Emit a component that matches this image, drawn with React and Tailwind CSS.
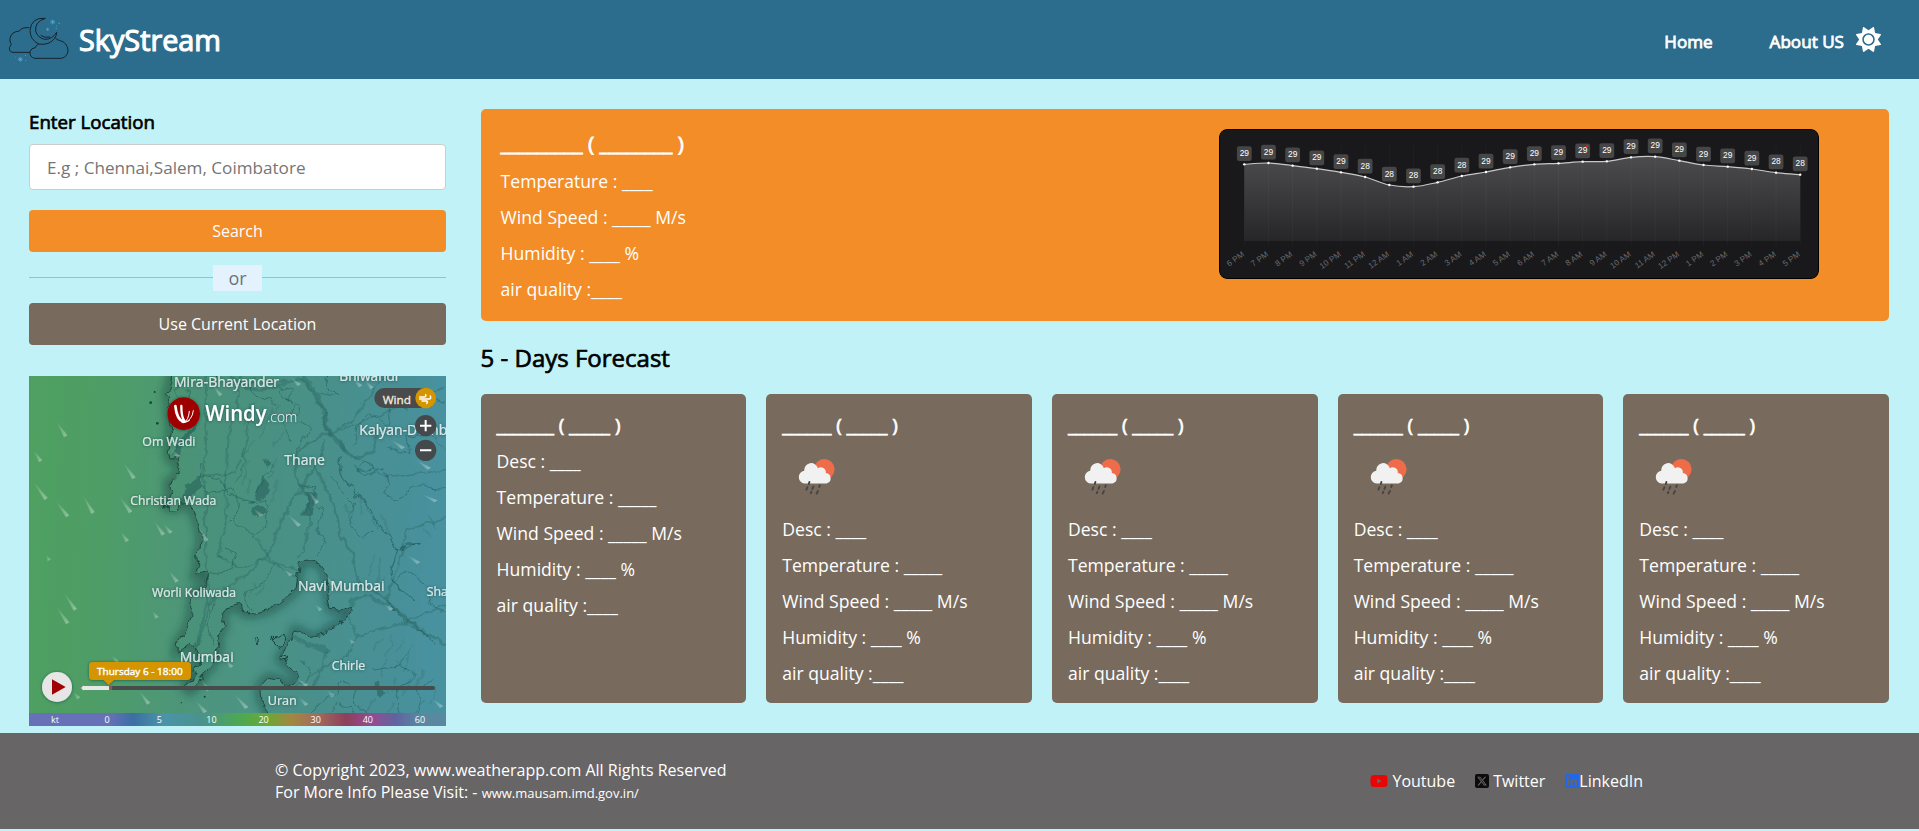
import React from "react";
import { FaSun, FaYoutube, FaSquareXTwitter, FaLinkedin } from "react-icons/fa6";

const HOURS = [
  ["6 PM", 29, 133], ["7 PM", 29, 129], ["8 PM", 29, 137], ["9 PM", 29, 146],
  ["10 PM", 29, 157], ["11 PM", 28, 171], ["12 AM", 28, 195], ["1 AM", 28, 200],
  ["2 AM", 28, 187], ["3 AM", 28, 168], ["4 AM", 29, 156], ["5 AM", 29, 142],
  ["6 AM", 29, 133], ["7 AM", 29, 130], ["8 AM", 29, 125], ["9 AM", 29, 124],
  ["10 AM", 29, 112], ["11 AM", 29, 110], ["12 PM", 29, 122], ["1 PM", 29, 135],
  ["2 PM", 29, 140], ["3 PM", 29, 147], ["4 PM", 28, 158], ["5 PM", 28, 164],
].map(([label, value, y], i) => ({ label, value, x: 25.3 + i * 24.17, y: y / 3 - 9 }));

function smooth(points) {
  let d = `M${points[0].x} ${points[0].y}`;
  for (let i = 0; i < points.length - 1; i++) {
    const p0 = points[Math.max(0, i - 1)];
    const p1 = points[i];
    const p2 = points[i + 1];
    const p3 = points[Math.min(points.length - 1, i + 2)];
    d += ` C${p1.x + (p2.x - p0.x) / 6} ${p1.y + (p2.y - p0.y) / 6} ${p2.x - (p3.x - p1.x) / 6} ${p2.y - (p3.y - p1.y) / 6} ${p2.x} ${p2.y}`;
  }
  return d;
}

function HourlyChart() {
  const line = smooth(HOURS);
  return (
    <svg width="600" height="150" viewBox="0 0 600 150" className="block shrink-0 rounded-lg">
      <defs>
        <linearGradient id="area" x1="0" y1="0" x2="0" y2="1">
          <stop offset="0" stopColor="#4c4c4e" />
          <stop offset="1" stopColor="#262628" />
        </linearGradient>
      </defs>
      <rect x="0.5" y="0.5" width="599" height="149" rx="7.5" fill="#19191b" stroke="#000" />
      <path d={`${line} L581.2 112 L25.3 112 Z`} fill="url(#area)" />
      {HOURS.map((h) => (
        <path key={h.label} d={`M${h.x} 16V117`} stroke="#fff" strokeOpacity="0.03" />
      ))}
      <path d={line} fill="none" stroke="#c8c8c8" strokeWidth="1.2" />
      {HOURS.map((h) => (
        <g key={h.label} fontFamily="'Liberation Sans', Arial, sans-serif">
          <circle cx={h.x} cy={h.y} r="1.2" fill="#fff" />
          <rect x={h.x - 7.4} y={h.y - 18.2} width="14.8" height="14.8" rx="2.2" fill="#464647" />
          <text x={h.x} y={h.y - 8.3} fontSize="8.4" fill="#fff" textAnchor="middle">{h.value}</text>
          <text x={h.x + 0.6} y="127" fontSize="8.2" fill="#6c6c6e" textAnchor="end" transform={`rotate(-35 ${h.x} 127)`}>{h.label}</text>
        </g>
      ))}
      <circle cx="368" cy="17" r="1.2" fill="#f01818" />
    </svg>
  );
}

function Logo() {
  return (
    <svg width="60" height="46" viewBox="27 48 180 138" fill="none" stroke="#16232c" strokeWidth="3" className="block">
      <path d="M90 154H36Q26 150 28 140L34 130Q28 124 30 112Q34 92 58 90Q66 78 88 80" />
      <path d="M136 52Q94 48 90 88Q90 116 116 129Q148 134 164 112Q170 104 170 94Q156 116 134 115Q112 110 107 90Q104 62 136 52Z" />
      <path d="M122 103Q134 112 150 108" />
      <path d="M104 172H184Q203 168 204 148Q202 124 178 118Q170 118 166 110" />
      <path d="M104 172Q88 168 90 152Q94 140 106 140Q108 132 116 129" />
      <g stroke="#4fa9d6" strokeWidth="2.4">
        <path d="M158 56V70M151 63H165M153 58L163 68M163 58L153 68M143 80V90M138 85H148M61 168V182M54 175H68M56 170L66 180M66 170L56 180" />
        <path d="M175 67H180M167 82H171M168 74H170M45 169H47M75 163H78M76 178H79" />
      </g>
    </svg>
  );
}

const LAND =
  "M455 10L452 40L440 75L450 85L446 120L450 150L455 180L449 200L450 225L444 240L450 268L470 262L477 290L474 315L460 330L445 336L445 360L456 372L448 395L425 408L445 406L455 418L472 415L480 398L500 400L520 425L535 460L543 500L540 540L530 556L534 590L525 618L548 612L560 605L566 616L552 650L530 665L518 680L512 750L494 790L474 816L470 846L490 830L512 824L530 838L540 868L520 900L535 915L500 940L496 950L512 962L530 940L545 930L550 905L575 890L585 855L598 830L590 800L612 770L605 740L615 718L640 708L665 702L668 725L682 720L686 732L712 728L746 720L790 692L828 658L838 582L850 574L880 573L905 585L918 615L922 670L930 718L960 720L985 710L992 728L978 740L960 765L925 775L915 795L870 803L850 790L825 780L815 810L795 835L780 870L800 872L805 890L832 912L830 938L795 955L785 932L745 922L720 950L722 985L740 1015L755 1075H1290V10Z";

const MAP_LABELS = [
  ["Mira-Bhayander", 462, 51, 42], ["Bhiwandi", 958, 32, 41], ["Om Wadi", 367, 228, 37],
  ["Kalyan-Domb", 1018, 195, 42], ["Thane", 793, 284, 42], ["Christian Wada", 331, 405, 36.5],
  ["Worli Koliwada", 396, 681, 36.5], ["Navi Mumbai", 834, 663, 42], ["Sha", 1220, 677, 37],
  ["Mumbai", 479, 876, 42], ["Chirle", 935, 900, 37], ["Uran", 743, 1005, 38],
];

const STREAKS = [
  [108, 152, 137, 200], [40, 240, 62, 275], [308, 275, 342, 326], [36, 330, 78, 388],
  [105, 390, 143, 440], [186, 372, 219, 430], [295, 375, 332, 428], [400, 450, 430, 495],
  [430, 462, 453, 489], [300, 482, 322, 515], [535, 470, 560, 513], [450, 235, 476, 262],
  [578, 45, 602, 77], [810, 20, 838, 46], [995, 22, 1022, 50], [1032, 28, 1056, 56],
  [1110, 208, 1150, 236], [1185, 268, 1228, 297], [1205, 372, 1248, 395], [862, 358, 892, 400],
  [800, 430, 838, 468], [700, 415, 724, 438], [445, 600, 471, 636], [130, 665, 166, 720],
  [108, 708, 143, 761], [396, 722, 411, 744], [78, 555, 88, 572], [790, 595, 813, 617],
  [1160, 555, 1196, 580], [885, 702, 902, 722], [355, 960, 386, 1002], [525, 990, 556, 1028],
  [640, 970, 680, 1015], [830, 925, 860, 948], [835, 980, 860, 1006], [920, 960, 940, 980],
  [545, 930, 566, 962], [275, 855, 292, 878], [615, 868, 635, 892], [1090, 700, 1115, 720],
  [160, 965, 176, 986], [1235, 985, 1265, 1012], [985, 805, 1000, 820], [915, 615, 938, 645],
];

const SCALE = ["kt", "0", "5", "10", "20", "30", "40", "60"];

function WindMap() {
  return (
    <div className="relative h-[350px] w-full overflow-hidden">
      <svg width="417" height="350" viewBox="27 18 1251 1050" className="block">
        <defs>
          <linearGradient id="sea" gradientUnits="userSpaceOnUse" x1="27" y1="18" x2="1278" y2="90">
            <stop offset="0" stopColor="#4fa060" />
            <stop offset="0.2" stopColor="#4e9d67" />
            <stop offset="0.42" stopColor="#4d957b" />
            <stop offset="0.68" stopColor="#4b938b" />
            <stop offset="0.9" stopColor="#4a939b" />
            <stop offset="1" stopColor="#4a94a3" />
          </linearGradient>
          <filter id="soft" x="-10%" y="-10%" width="120%" height="120%">
            <feGaussianBlur stdDeviation="13" />
          </filter>
          <filter id="rough" filterUnits="userSpaceOnUse" x="0" y="0" width="1310" height="1090" colorInterpolationFilters="sRGB">
            <feTurbulence type="fractalNoise" baseFrequency="0.03" numOctaves="3" seed="4" />
            <feDisplacementMap in="SourceGraphic" scale="26" xChannelSelector="R" yChannelSelector="G" />
          </filter>
          <filter id="label" x="-10%" y="-30%" width="120%" height="160%">
            <feDropShadow dx="0" dy="1" stdDeviation="4" floodColor="#183838" floodOpacity="0.65" />
          </filter>
          <clipPath id="land"><path d={LAND} /></clipPath>
          <linearGradient id="trail" x1="0" y1="0" x2="1" y2="1">
            <stop offset="0" stopColor="#fff" stopOpacity="0" />
            <stop offset="1" stopColor="#fff" stopOpacity="0.38" />
          </linearGradient>
        </defs>
        <rect x="27" y="18" width="1251" height="1050" fill="url(#sea)" />
        <path d={LAND} fill="none" stroke="#103c38" strokeOpacity="0.5" strokeWidth="26" filter="url(#soft)" />
        <g filter="url(#rough)">
          <path d={LAND} fill="url(#sea)" />
          <path d={LAND} fill="#204c54" fillOpacity="0.04" />
          <g clipPath="url(#land)" fill="none" strokeLinejoin="round" strokeLinecap="round">
            <g stroke="#2c6a64" strokeOpacity="0.42">
              <path strokeWidth="9" d="M640 18Q690 80 760 50T830 30Q880 40 885 90L915 120Q910 160 930 190Q960 200 975 240Q985 262 1010 260T1060 240Q1075 210 1065 180" />
              <path strokeWidth="14" d="M850 25Q890 55 895 90Q915 130 925 185L970 235" />
              <path strokeWidth="7" d="M915 210L885 290L850 345L780 460L740 560L700 600L640 640L570 700L540 800L520 850" />
              <path strokeWidth="6" d="M555 18Q560 70 555 140Q560 220 555 290T560 400Q550 470 560 600T560 700Q540 760 530 830" />
              <path strokeWidth="6" d="M660 18Q650 60 655 110Q625 160 620 240L618 350Q625 420 610 480T600 560" />
              <path strokeWidth="8" d="M925 185Q870 215 840 240Q810 300 840 345L870 400L850 430M885 290L940 400L960 500L1000 560L1020 640L1100 690L1200 780L1290 830" />
              <path strokeWidth="5" d="M930 190L1000 150L1050 70L1100 18M930 190L1040 150L1170 100L1270 50M960 230L1100 320L1290 300" />
              <path strokeWidth="8" d="M985 712Q1020 670 1055 680Q1075 710 1110 700L1150 740L1210 790" />
              <path strokeWidth="11" d="M825 800Q850 830 880 830T925 840" />
              <path strokeWidth="5" d="M925 840L900 910L880 960M990 740L1010 800L980 860L900 900L830 950M1010 800L1120 770L1200 740L1290 700" />
              <path strokeWidth="5" d="M830 560Q860 520 870 470L870 400M710 510L760 580L830 620M600 560L660 590L740 570L830 600M1100 690L1130 600L1160 480L1290 440" />
              <path strokeWidth="5" d="M450 260L520 170L530 160M490 110L460 60L500 30M560 320L640 310L660 270M640 340L670 290L680 180L690 100" />
            </g>
            <g stroke="#14494a" strokeOpacity="0.5" strokeWidth="2.4">
              <path d="M915 18L930 60L950 80L900 70M780 50L820 60L800 90L840 110L830 150L870 170L860 200L840 210L830 250L800 260M705 20L690 60L720 90L750 80L770 110" />
              <path d="M960 260L965 310L975 340L1000 350L1005 380L1040 400L1060 440L1080 470L1110 500L1130 540L1110 600L1120 640L1180 690" strokeWidth="3.4" />
              <path d="M1000 225L1010 170L1050 130L1100 170L1110 110L1160 120L1190 60L1270 100M1100 230L1170 250L1160 200L1230 190L1280 240" />
              <path d="M1000 290L1030 320L1090 290L1110 340L1090 370L1130 390L1180 350L1290 355M1010 300Q1040 260 1060 295Q1040 310 1010 300" />
              <path d="M740 270L760 290L735 310L700 400L640 380L600 330L540 320L550 280M550 350L560 370L640 360L660 420L630 450M690 400L740 390L740 470L700 500L640 450" />
              <path d="M840 345L890 350L880 400L910 420L890 470L920 520L890 560M940 320L960 360L1000 400L990 470L1030 500L1060 480" />
              <path d="M570 610L630 600L650 550L610 540M690 720L670 670L740 630L760 580M1130 540L1200 520M1120 640L1160 600L1220 650L1230 700L1290 740" />
              <path d="M1100 690L1170 770L1220 790L1240 820M1130 870L1190 920L1130 960L1140 1030M850 1060L900 1000L950 970L960 930L1010 960L1000 1000L1030 1020L1070 1060M930 1060L950 1000L990 1010L1020 1050" />
              <path d="M580 700L560 770L580 830M840 870L870 890L860 930M1180 1060L1200 1010L1190 960L1240 930M1060 900L1130 890L1180 830" />
              <path d="M780 60L820 110L790 160L810 210M500 60L520 100L500 150L480 170" />
              <path d="M1140 535L1160 522H1200" strokeWidth="5" />
            </g>
            <g fill="#245c58" fillOpacity="0.55">
              <path d="M712 350L725 325L745 330L750 360L735 385L710 390Z" />
              <path d="M728 270L745 262L755 272L740 292Z" />
              <path d="M700 415L715 405L738 425L715 440L695 432Z" />
              <path d="M850 360L895 375L880 420L875 438L852 430L862 395Z" />
              <path d="M485 395L500 350L540 320L548 300L545 350L515 370L490 405Z" />
              <path d="M455 255L490 190L535 155L520 180L490 225L475 262Z" />
              <path d="M550 610L568 618L560 640L535 665L520 668Z" />
              <path d="M480 830L510 824L530 840L520 870L505 860Z" />
              <path d="M1065 935L1080 935L1100 970L1075 980Z" />
            </g>
            <g stroke="#255e5c" strokeOpacity="0.2" strokeWidth="5">
              <path d="M700 100L670 160M730 110L700 160M760 120L720 200M700 210L670 260M780 110L750 150M790 190L760 230M680 280L670 340M770 270L750 320M690 330L680 370M770 330L760 390" />
              <path d="M1010 370L1030 430M1040 420L1070 470M1080 430L1110 490M980 400L990 450M1060 560L1050 620M1080 570L1070 640M1090 620L1070 670" />
              <path d="M1080 800L1060 840M1120 800L1100 860M1150 810L1130 850M1170 850L1150 900M1100 870L1080 920M1170 930L1150 980M1130 920L1110 960M1210 900L1190 950M1060 990L1030 1040M1120 1000L1080 1060M1210 990L1160 1060M1250 960L1230 1000" />
              <path d="M700 640L690 680M735 640L710 680M1230 440L1250 480M1210 480L1230 500" />
            </g>
          </g>
          <path d={LAND} fill="none" stroke="#123f38" strokeOpacity="0.8" strokeWidth="3" strokeLinejoin="round" />
          <g fill="#4a8b82" stroke="#163f3c" strokeWidth="3">
            <path d="M757 808L775 793L793 790L790 815L778 830Z" />
            <path d="M704 806L710 802L716 812L708 822Z" />
            <path d="M778 870L800 855L798 868L785 875Z" />
          </g>
        </g>
        <g fill="#174438">
          <circle cx="404" cy="66" r="3" /><circle cx="392" cy="98" r="4" /><circle cx="412" cy="160" r="4" />
          <circle cx="554" cy="980" r="3" /><circle cx="484" cy="998" r="2" />
        </g>
        {STREAKS.map(([x1, y1, x2, y2]) => (
          <path key={`${x1}-${y1}`} d={`M${x1} ${y1}L${x2 - 5} ${y2 + 2}L${x2 + 5} ${y2 - 4}Z`} fill="url(#trail)" />
        ))}
        <g fontFamily="'Open Sans', sans-serif" fill="#d9e7e5" stroke="#d9e7e5" strokeWidth="0.5" filter="url(#label)">
          {MAP_LABELS.map(([name, x, y, size]) => (
            <text key={name} x={x} y={y} fontSize={size}>{name}</text>
          ))}
        </g>
        <g filter="url(#label)">
          <circle cx="491" cy="131" r="49" fill="#9e0202" />
          <g fill="none" stroke="#fff" strokeLinecap="round">
            <path strokeWidth="8" d="M466 108Q470 148 490 155" />
            <path strokeWidth="7" d="M484 108Q484 144 494 154" />
            <path strokeWidth="3" d="M494 157Q516 152 520 122M492 158Q506 150 508 124M486 158Q498 158 508 152" />
          </g>
          <text x="556" y="154" fontFamily="'Open Sans', sans-serif" fontSize="66" fontWeight="600" fill="#fff" textLength="184" lengthAdjust="spacingAndGlyphs">Windy</text>
          <text x="741" y="155" fontFamily="'Open Sans', sans-serif" fontSize="43" fontWeight="300" fill="#f0f6f5" textLength="91" lengthAdjust="spacingAndGlyphs">.com</text>
        </g>
        <g>
          <rect x="1063" y="54" width="180" height="60" rx="30" fill="#484a4c" />
          <text x="1088" y="102" fontFamily="'Open Sans', sans-serif" fontSize="33" fill="#f2e9db" stroke="#f2e9db" strokeWidth="1" textLength="85" lengthAdjust="spacingAndGlyphs">Wind</text>
          <circle cx="1217" cy="84" r="31" fill="#d49500" />
          <path d="M1199 81H1214Q1219 80 1217 74M1199 87H1228Q1234 85 1231 78M1206 93H1220Q1225 96 1220 100" fill="none" stroke="#fff" strokeWidth="4.5" strokeLinecap="round" strokeLinejoin="round" />
          <circle cx="1217" cy="167" r="32" fill="#444a4c" />
          <circle cx="1217" cy="241" r="32" fill="#444a4c" />
          <path d="M1200 167H1234M1217 150V184M1200 241H1234" stroke="#fff" strokeWidth="6" />
        </g>
        <g>
          <rect x="184" y="948" width="1061" height="12" rx="6" fill="#474b49" />
          <path d="M183 954L190 946V948H268V960H190V962Z" fill="#e6e8e6" />
          <rect x="268" y="948" width="8" height="12" fill="#8c5a4a" />
          <g filter="url(#label)">
            <circle cx="111" cy="951" r="45" fill="#e6e6e6" />
            <rect x="207" y="876" width="306" height="54" rx="12" fill="#d49500" />
            <path d="M250 929H282L266 944Z" fill="#d49500" />
          </g>
          <path d="M96 928L137 951L96 974Z" fill="#9e0202" />
          <text x="231" y="915" fontFamily="'Open Sans', sans-serif" fontSize="29" fill="#fff" stroke="#fff" strokeWidth="1.2" textLength="257" lengthAdjust="spacingAndGlyphs">Thursday 6 - 18:00</text>
        </g>
      </svg>
      <div className="absolute inset-x-0 bottom-0 grid h-[13px] grid-cols-8 bg-[linear-gradient(to_right,#6771b8_0%,#6771b8_19%,#3c6ea3_25%,#4a94a9_32%,#4a928f_41%,#4da94f_51%,#6aa835_57%,#a28740_63%,#a26d5c_69%,#8d3f5c_76%,#974b91_82%,#5f64a0_88%,#5b88a1_94%,#5b88a1_100%)] text-center text-[9px] leading-[13px] text-white">
        {SCALE.map((s) => <span key={s}>{s}</span>)}
      </div>
    </div>
  );
}

function RainIcon() {
  return (
    <svg width="50" height="50" viewBox="0 0 50 50" className="mt-[15px] ml-2.5 block">
      <circle cx="32.3" cy="16.2" r="10.3" fill="#ee6c4a" />
      <path d="M12.6 30.5A6.4 6.4 0 0 1 12.2 17.8A7 7 0 0 1 25.9 15.2A5 5 0 0 1 33.8 19.9A5.4 5.4 0 0 1 34.6 30.5Z" fill="#f1f1f1" />
      <path d="M17.4 29L16.8 31M15.4 34.2L14.4 36.6M21.4 33.6L20.4 36M27.8 32.2L27.2 34M19.4 38.8L18.8 40.2M26 38L24.6 40.6" stroke="#454545" strokeWidth="1.9" strokeLinecap="round" />
    </svg>
  );
}

function Readings({ rows }) {
  return rows.map((r) => <p key={r} className="mt-3 text-[17.6px] leading-6 whitespace-nowrap">{r}</p>);
}

const COMMON = ["Wind Speed : _____ M/s", "Humidity : ____ %", "air quality :____"];

function DayCard({ title, first }) {
  return (
    <li className="h-[309px] rounded-[5px] bg-[#786b5d] pt-[18px] pl-4 text-white">
      <h3 className="text-[18.7px] leading-[26px] [-webkit-text-stroke:0.7px_white]">{title}</h3>
      {!first && <RainIcon />}
      <div className={first ? "-mt-px" : "-mt-1 pt-1.5"}>
        <Readings rows={["Desc : ____", "Temperature : _____", ...COMMON]} />
      </div>
    </li>
  );
}

export default function App() {
  return (
    <div className="flex h-[831px] flex-col bg-[#c1f2f7] font-['Open_Sans',sans-serif] text-black">
      <header className="flex h-[79px] shrink-0 items-center bg-[#2c6d8d] pr-[38px] pl-[9px] text-white">
        <Logo />
        <h1 className="ml-2.5 text-[28.8px] leading-[38px] [-webkit-text-stroke:1.1px_white]">SkyStream</h1>
        <nav className="ml-auto flex items-center text-[17.1px] [-webkit-text-stroke:0.8px_white]">
          <a className="mt-1 mr-[57px]">Home</a>
          <a className="mt-1 mr-3">About US</a>
        </nav>
        <FaSun className="size-[25px]" />
      </header>

      <main className="flex h-[657px] shrink-0 pt-[30px] pr-[30px] pl-[29px]">
        <aside className="flex w-[417px] shrink-0 flex-col">
          <h3 className="-mt-px mb-px text-[18.7px] leading-[27px] [-webkit-text-stroke:0.7px_black]">Enter Location</h3>
          <input
            className="mt-2 h-[46px] rounded-[4px] border border-[#ccc] bg-white px-[17px] text-[17.12px] placeholder:text-[#757575]"
            placeholder="E.g ; Chennai,Salem, Coimbatore"
          />
          <button className="mt-5 h-[42px] rounded-[4px] bg-[#f28d28] text-base text-white">Search</button>
          <div className="mt-3 mb-px flex h-[26px] items-center">
            <span className="h-px flex-1 bg-[#b5b5b5]" />
            <span className="mt-px h-[26px] w-[49px] bg-[#e3f2fd] text-center text-[18px] leading-[26px] text-[#6c757d]">or</span>
            <span className="h-px flex-1 bg-[#b5b5b5]" />
          </div>
          <button className="mt-3 mb-[31px] h-[42px] rounded-[4px] bg-[#786b5d] text-base text-white">Use Current Location</button>
          <WindMap />
        </aside>

        <section className="ml-[34.6px] min-w-0 flex-1">
          <div className="flex h-[212px] justify-between rounded-[5px] bg-[#f28d28] pt-5 pr-[70px] pl-5 text-white">
            <div>
              <h2 className="text-[20.8px] leading-[28px] [-webkit-text-stroke:0.8px_white]">_________ ( ________ )</h2>
              <Readings rows={["Temperature : ____", ...COMMON]} />
            </div>
            <HourlyChart />
          </div>
          <h2 className="mt-5 mb-[19px] text-[24px] leading-[34px] [-webkit-text-stroke:0.7px_black]">5 - Days Forecast</h2>
          <ul className="grid grid-cols-5 gap-5">
            <DayCard title="_______ ( _____ )" first />
            <DayCard title="______ ( _____ )" />
            <DayCard title="______ ( _____ )" />
            <DayCard title="______ ( _____ )" />
            <DayCard title="______ ( _____ )" />
          </ul>
        </section>
      </main>

      <footer className="mt-[-3px] flex h-[96px] shrink-0 items-center bg-[#686566] pr-[276px] pl-[275px] text-base text-white">
        <div className="pt-px leading-[22px]">
          <p>© Copyright 2023, www.weatherapp.com All Rights Reserved</p>
          <p>For More Info Please Visit: - <span className="text-[13px]">www.mausam.imd.gov.in/</span></p>
        </div>
        <div className="ml-auto flex items-center">
          <FaYoutube className="mr-1 h-4 w-[18px] text-[#ea0404]" />
          <span>Youtube</span>
          <FaSquareXTwitter className="mr-1 ml-5 h-4 w-3.5 text-[#0c0c0c]" />
          <span>Twitter</span>
          <FaLinkedin className="ml-5 h-4 w-3.5 text-[#2367e6]" />
          <span>LinkedIn</span>
        </div>
      </footer>
    </div>
  );
}
